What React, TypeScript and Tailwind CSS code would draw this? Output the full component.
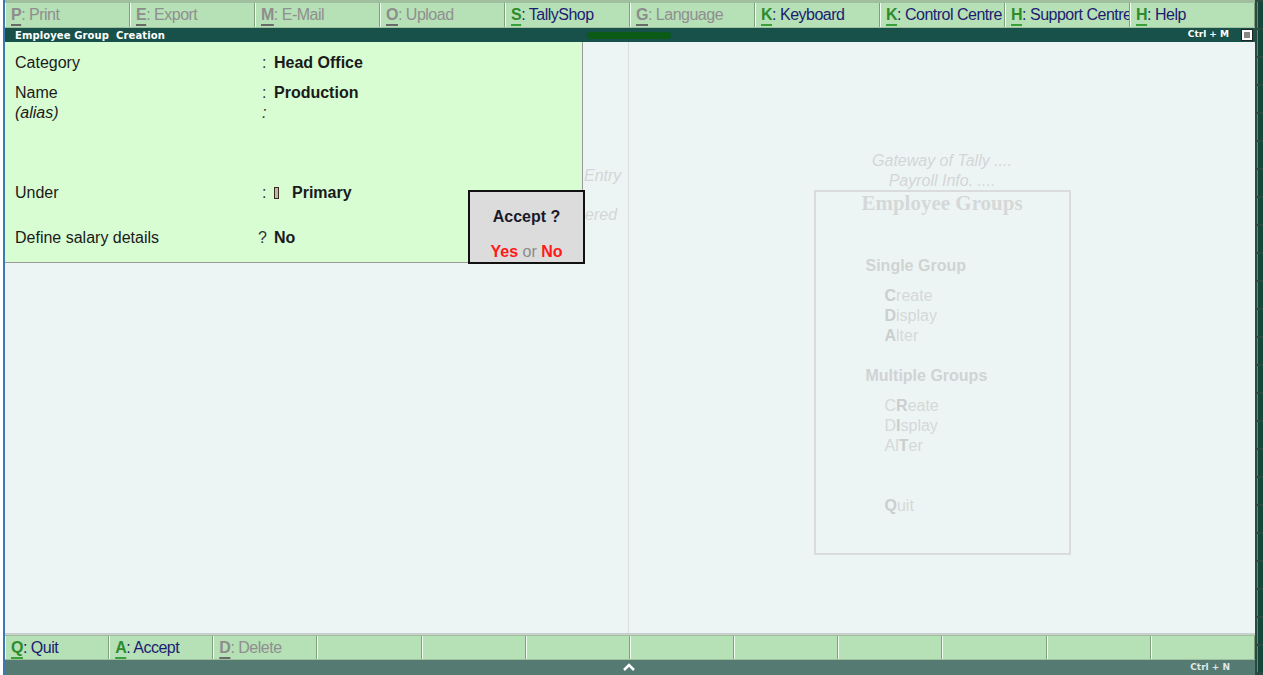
import React from "react";

const F = { fontFamily: '"Liberation Sans", Arial, sans-serif' } as const;

type Btn = { k: string; label: string; on: boolean };

const top: Btn[] = [
  { k: "P", label: "Print", on: false },
  { k: "E", label: "Export", on: false },
  { k: "M", label: "E-Mail", on: false },
  { k: "O", label: "Upload", on: false },
  { k: "S", label: "TallyShop", on: true },
  { k: "G", label: "Language", on: false },
  { k: "K", label: "Keyboard", on: true },
  { k: "K", label: "Control Centre", on: true },
  { k: "H", label: "Support Centre", on: true },
  { k: "H", label: "Help", on: true },
];

const bottom: (Btn | null)[] = [
  { k: "Q", label: "Quit", on: true },
  { k: "A", label: "Accept", on: true },
  { k: "D", label: "Delete", on: false },
  null, null, null, null, null, null, null, null, null,
];

function ButtonCell({ b }: { b: Btn | null }) {
  return (
    <div className="h-full bg-[#b6e0b6] border-l border-l-[#f2fff2] border-r border-r-[#7f9f7f] flex items-center pl-[5px] overflow-hidden whitespace-nowrap text-[16px] leading-none tracking-[-0.5px]">
      {b && (
        <>
          <span
            className={
              "font-bold underline decoration-2 underline-offset-[4px] " +
              (b.on ? "text-[#2e8b2e] decoration-[#3aa03a]" : "text-[#8d8d8d] decoration-[#6a6a6a]")
            }
          >
            {b.k}
          </span>
          <span className={b.on ? "text-[#1c1c70]" : "text-[#8f8f8f]"}>: {b.label}</span>
        </>
      )}
    </div>
  );
}

function Row({ label, sep, value, italic, q }: { label: string; sep: string; value?: React.ReactNode; italic?: boolean; q?: boolean }) {
  return (
    <div className="grid grid-cols-[247px_12px_auto] h-[20px] items-center text-[16px] text-[#1a1a1a]">
      <div className={italic ? "italic" : ""}>{label}</div>
      <div className={"text-[#333] " + (italic ? "italic " : "") + (q ? "-ml-[4px]" : "")}>{sep}</div>
      <div className="font-bold">{value}</div>
    </div>
  );
}

function Faded({ parts }: { parts: [string, boolean][] }) {
  return (
    <div className="h-[20px] leading-[20px]">
      {parts.map(([t, bold], i) => (
        <span key={i} className={bold ? "text-[#cbcecf] font-bold" : ""}>
          {t}
        </span>
      ))}
    </div>
  );
}

export default function App() {
  return (
    <div className="w-[1263px] h-[675px] flex overflow-hidden bg-white" style={F}>
      {/* left edge */}
      <div className="w-[5px] h-full bg-white border-r-2 border-r-[#3b78b8]" />
      {/* middle */}
      <div className="w-[1250px] h-full flex flex-col">
        {/* top button bar */}
        <div className="h-[28px] bg-[#9fbf9f] pt-[3px] pb-[1px]">
          <div className="grid grid-cols-10 h-full">
            {top.map((b, i) => (
              <ButtonCell key={i} b={b} />
            ))}
          </div>
        </div>
        {/* title bar */}
        <div className="h-[14px] bg-[#18514a] flex items-center relative">
          <span className="pl-[10px] text-[10px] font-bold text-white tracking-[0.1px]" style={{ fontFamily: '"DejaVu Sans", sans-serif' }}>
            Employee Group&nbsp; Creation
          </span>
          <div className="absolute left-[582px] top-[4px] w-[84px] h-[7px] rounded-full bg-[#0b5a16]" />
          <div className="ml-auto flex items-center">
            <span className="text-[9px] font-bold text-white mr-[12px]" style={{ fontFamily: '"DejaVu Sans", sans-serif' }}>
              Ctrl + M
            </span>
            <div className="w-[12px] h-[12px] bg-white border border-[#222] flex items-center justify-center mr-[2px]">
              <div className="w-[6px] h-[6px] bg-[#888]" />
            </div>
          </div>
        </div>
        {/* main */}
        <div className="h-[591px] bg-[#edf5f4] relative flex">
          {/* left half */}
          <div className="w-[624px] h-full border-r border-r-[#d9dede] relative">
            <div className="w-[578px] h-[221px] bg-[#d9fdd3] border-r border-b border-[#9a9a9a] pl-[10px] pt-[9px]">
              <Row label="Category" sep=":" value="Head Office" />
              <div className="h-[10px]" />
              <Row label="Name" sep=":" value="Production" />
              <Row label="(alias)" sep=":" italic />
              <div className="h-[60px]" />
              <Row
                label="Under"
                sep=":"
                value={
                  <span className="flex items-center">
                    <span className="inline-block w-[5px] h-[12px] bg-[#bdb9a8] border border-[#3a2a20] mr-[13px]" />
                    Primary
                  </span>
                }
              />
              <div className="h-[25px]" />
              <Row label="Define salary details" sep="?" value="No" q />
            </div>
            {/* faded background text */}
            <div className="absolute left-[579px] top-[122px] italic text-[16px] text-[#d3d6d6]">Entry</div>
            <div className="absolute left-[580px] top-[161px] italic text-[16px] text-[#d3d6d6]">ered</div>
            {/* accept box */}
            <div className="absolute left-[463px] top-[148px] w-[117px] h-[74px] bg-[#dcdcdc] border-2 border-[#111] flex flex-col items-center">
              <div className="mt-[13px] text-[16px] font-bold text-[#1a1a2a]">Accept ?</div>
              <div className="mt-[11px] text-[16px]">
                <span className="font-bold text-[#ff1a1a]">Yes</span>
                <span className="text-[#8a8a8a]"> or </span>
                <span className="font-bold text-[#ff1a1a]">No</span>
              </div>
            </div>
          </div>
          {/* right half */}
          <div className="flex-1 h-full flex flex-col items-center pt-[109px] text-[#d3d6d6]">
            <div className="italic text-[16px] leading-[20px]">Gateway of Tally ....</div>
            <div className="italic text-[16px] leading-[19px]">Payroll Info. ....</div>
            <div className="w-[257px] h-[365px] border-2 border-[#dadcdc] flex flex-col">
              <div
                className="text-center text-[21px] font-bold leading-[20px] mt-[1px] text-[#d5d8d8]"
                style={{ fontFamily: '"Liberation Serif", "Times New Roman", serif' }}
              >
                Employee Groups
              </div>
              <div className="pl-[50px] mt-[43px] text-[16px] font-bold text-[#d0d3d3] leading-[20px]">Single Group</div>
              <div className="pl-[69px] mt-[10px] text-[16px] text-[#d5d8d8]">
                <Faded parts={[["C", true], ["reate", false]]} />
                <Faded parts={[["D", true], ["isplay", false]]} />
                <Faded parts={[["A", true], ["lter", false]]} />
              </div>
              <div className="pl-[50px] mt-[20px] text-[16px] font-bold text-[#d0d3d3] leading-[20px]">Multiple Groups</div>
              <div className="pl-[69px] mt-[10px] text-[16px] text-[#d5d8d8]">
                <Faded parts={[["C", false], ["R", true], ["eate", false]]} />
                <Faded parts={[["D", false], ["I", true], ["splay", false]]} />
                <Faded parts={[["Al", false], ["T", true], ["er", false]]} />
                <div className="h-[40px]" />
                <Faded parts={[["Q", true], ["uit", false]]} />
              </div>
            </div>
          </div>
        </div>
        {/* bottom bar */}
        <div className="h-[27px] bg-[#9fbf9f] border-t-2 border-t-[#c9cfcd] pt-[1px] pb-[1px]">
          <div className="grid grid-cols-12 h-full">
            {bottom.map((b, i) => (
              <ButtonCell key={i} b={b} />
            ))}
          </div>
        </div>
        {/* bottom strip */}
        <div className="h-[15px] bg-[#557a72] relative flex items-center">
          <svg className="absolute left-[618px] top-[3px]" width="12" height="8" viewBox="0 0 12 8">
            <path d="M1 7 L6 2 L11 7" stroke="white" strokeWidth="2.5" fill="none" />
          </svg>
          <span className="ml-auto mr-[25px] text-[9px] font-bold text-[#dfe8e6]" style={{ fontFamily: '"DejaVu Sans", sans-serif' }}>
            Ctrl + N
          </span>
        </div>
      </div>
      {/* right edge */}
      <div className="w-[8px] h-full bg-[#2a4a40] flex flex-col gap-[2px] pl-[2px] pt-[2px]">
        {Array.from({ length: 24 }).map((_, i) => (
          <div key={i} className="h-[26px] bg-[#14463a] border-l border-[#5f8a7a]" />
        ))}
      </div>
    </div>
  );
}
